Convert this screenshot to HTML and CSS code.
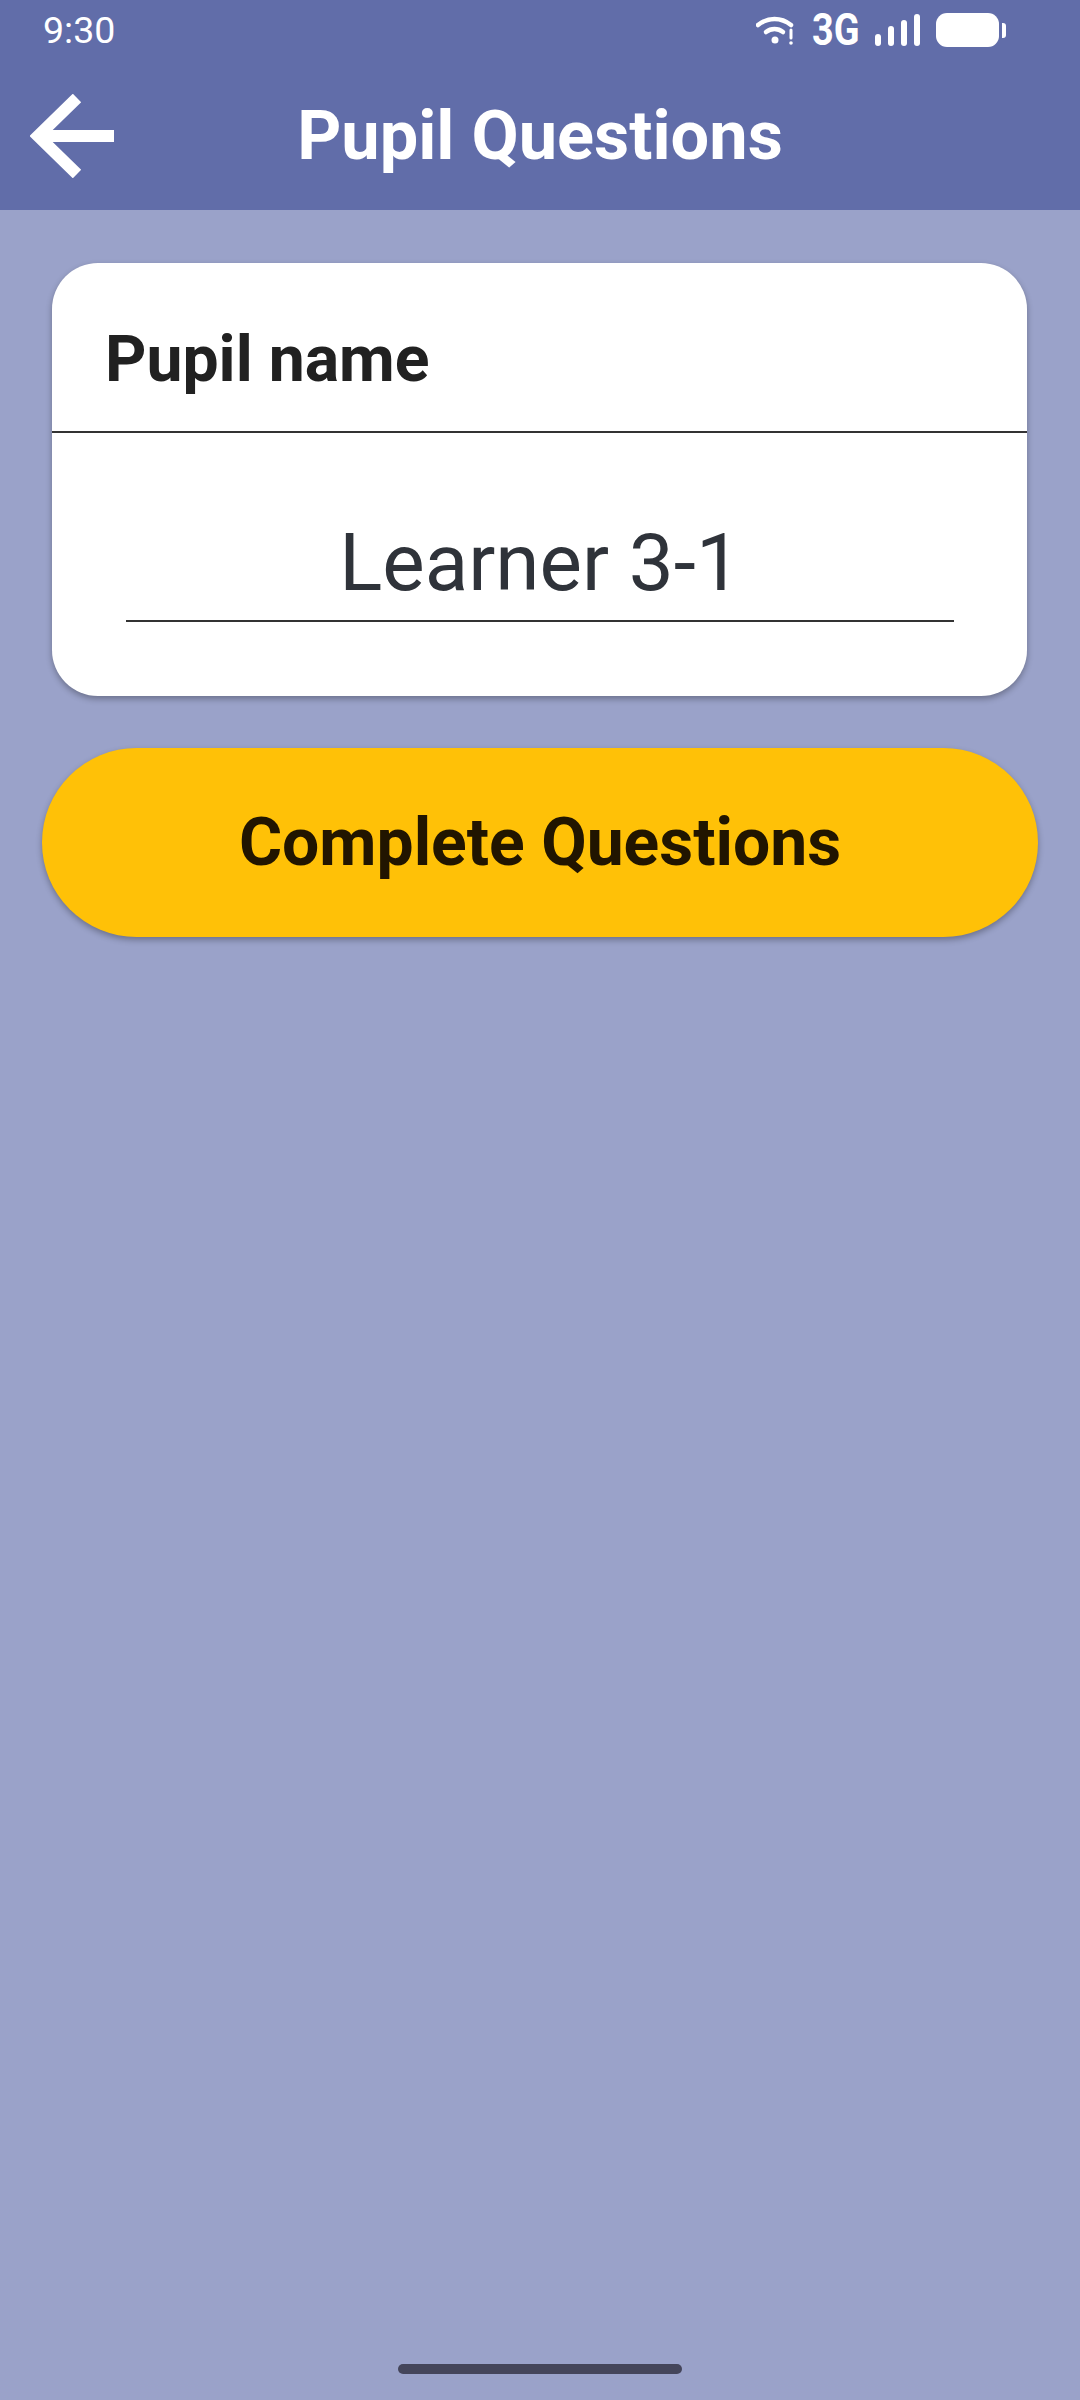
FILE: index.html
```html
<!DOCTYPE html>
<html lang="en">
<head>
  <meta charset="UTF-8" />
  <meta name="viewport" content="width=device-width, initial-scale=1" />
  <title>Pupil Questions</title>
  <link rel="stylesheet" href="styles.css">
</head>
<body>

  <header class="app-header">
    <div class="status-bar">
      <span class="clock">9:30</span>
      <div class="status-icons">
        <svg class="wifi" width="40" height="30" viewBox="0 0 40 30">
          <path d="M2 10C12 2 25 2 35 10" fill="none" stroke="#fff" stroke-width="4.5" stroke-linecap="round"/>
          <path d="M10 17C15 13 22 13 27 17" fill="none" stroke="#fff" stroke-width="4.5" stroke-linecap="round"/>
          <circle cx="19" cy="25" r="3.5" fill="#fff"/>
          <path d="M35 15V23" fill="none" stroke="#fff" stroke-width="3" stroke-linecap="round"/>
          <circle cx="35" cy="28" r="1.8" fill="#fff"/>
        </svg>
        <span class="network">3G</span>
        <svg class="signal" width="46" height="32" viewBox="0 0 46 32">
          <rect x="0" y="20" width="6" height="12" rx="3" fill="#fff"/>
          <rect x="13" y="12" width="6" height="20" rx="3" fill="#fff"/>
          <rect x="26" y="6" width="6" height="26" rx="3" fill="#fff"/>
          <rect x="39" y="0" width="6" height="32" rx="3" fill="#fff"/>
        </svg>
        <div class="battery">
          <div class="battery-body"></div>
          <div class="battery-nub"></div>
        </div>
      </div>
    </div>

    <div class="toolbar">
      <button class="back-btn" aria-label="Back">
        <svg width="88" height="84" viewBox="0 0 88 84">
          <path d="M47 4L8 42L47 80M8 42H84" fill="none" stroke="#fff" stroke-width="12"/>
        </svg>
      </button>
      <h1 class="title">Pupil Questions</h1>
    </div>
  </header>

  <main class="content">
    <section class="card">
      <div class="card-head">Pupil name</div>
      <div class="card-body">
        <div class="name-field">Learner 3-1</div>
      </div>
    </section>

    <button class="complete-btn">Complete Questions</button>
  </main>

  <div class="home-bar"></div>

</body>
</html>
```

FILE: styles.css
```css
* {
  box-sizing: border-box;
}
body {
  margin: 0;
  width: 1080px;
  height: 2400px;
  display: flex;
  flex-direction: column;
  background: #9aa2c9;
  font-family: Roboto, "Noto Sans", sans-serif;
}

/* header */
.app-header {
  height: 210px;
  background: #616da9;
  color: #fff;
}
.status-bar {
  height: 60px;
  padding: 0 74px 0 43px;
  display: flex;
  align-items: center;
  justify-content: space-between;
}
.clock {
  font-size: 37.5px;
}
.status-icons {
  display: flex;
  align-items: center;
}
.wifi {
  margin-right: 16px;
}
.network {
  font-size: 44px;
  font-weight: 700;
  line-height: 32px;
  width: 49px;
  transform: scaleX(0.86);
  transform-origin: left center;
  margin-right: 14px;
}
.signal {
  margin-right: 15px;
}
.battery {
  display: flex;
  align-items: center;
  gap: 3px;
}
.battery-body {
  width: 63px;
  height: 34px;
  border-radius: 11px;
  background: #fff;
}
.battery-nub {
  width: 4px;
  height: 15px;
  border-radius: 0 3px 3px 0;
  background: #fff;
}

/* toolbar */
.toolbar {
  height: 150px;
  display: flex;
  align-items: center;
  justify-content: center;
  position: relative;
}
.back-btn {
  position: absolute;
  left: 30px;
  top: 34px;
  padding: 0;
  border: none;
  background: none;
  line-height: 0;
}
.title {
  margin: 0;
  font-size: 68.5px;
  font-weight: 700;
}

/* content */
.content {
  flex-grow: 1;
  padding: 53px 42px 0;
  display: flex;
  flex-direction: column;
  gap: 52px;
}
.card {
  margin: 0 11px 0 10px;
  height: 433px;
  background: #fff;
  border-radius: 46px;
  box-shadow: 0 3px 6px rgba(0,0,0,0.3);
}
.card-head {
  height: 170px;
  padding: 24px 0 0 53px;
  display: flex;
  align-items: center;
  border-bottom: 2px solid #333;
  font-size: 64.3px;
  font-weight: 700;
  color: #212121;
}
.card-body {
  padding: 75px 73px 0 74px;
}
.name-field {
  height: 114px;
  border-bottom: 2px solid #333;
  text-align: center;
  font-size: 80px;
  line-height: 111px;
  color: #2f333a;
}
.complete-btn {
  height: 189px;
  padding: 0;
  border: none;
  border-radius: 95px;
  background: #ffc107;
  box-shadow: 0 3px 6px rgba(0,0,0,0.3);
  color: #211500;
  font-family: inherit;
  font-size: 66px;
  font-weight: 700;
}

/* home bar */
.home-bar {
  width: 284px;
  height: 10px;
  margin: 0 auto 26px;
  border-radius: 5px;
  background: #44455a;
}
```
